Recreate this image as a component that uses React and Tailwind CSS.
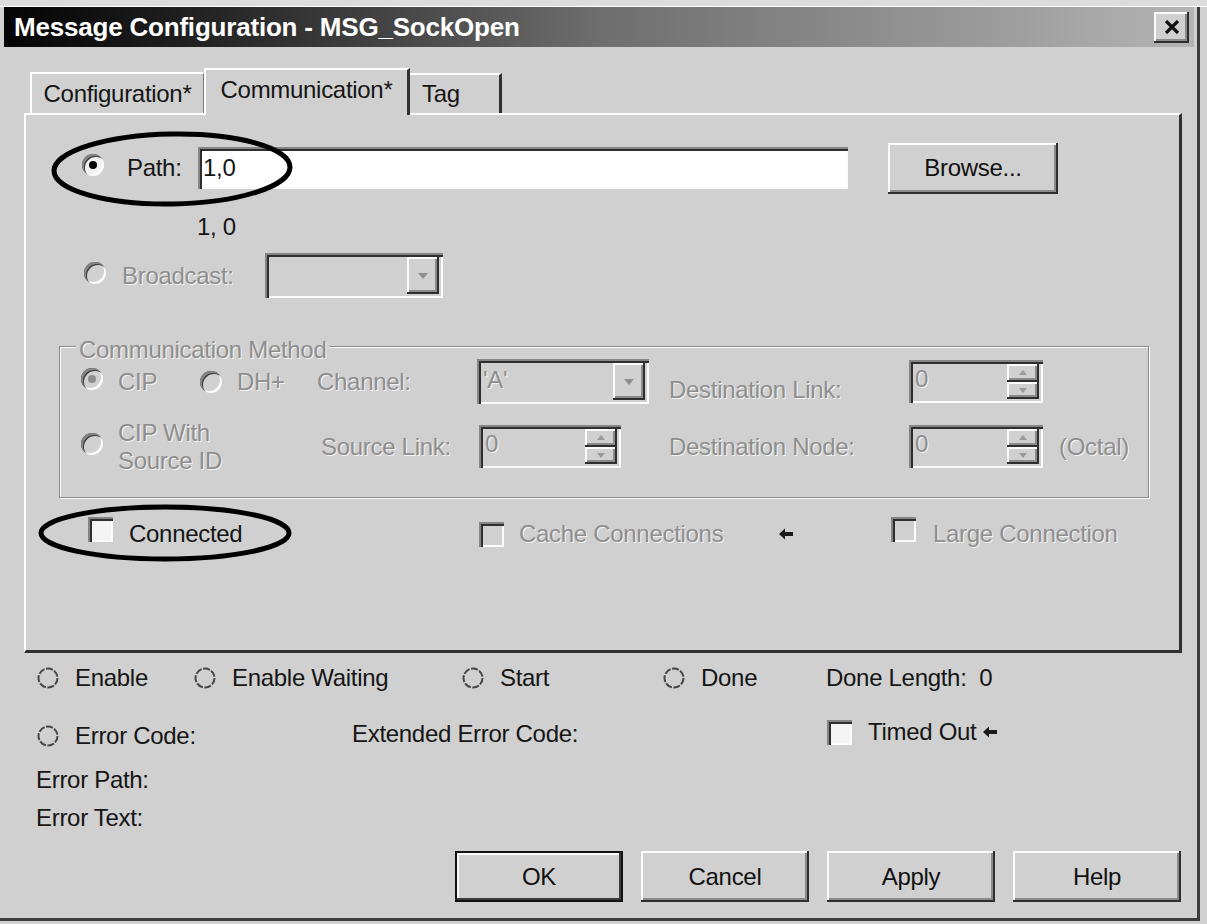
import React from "react";

// 3D edge helpers (classic Windows look)
const raised =
  "bg-[#d0d0d0] shadow-[inset_-2px_-2px_0_#2e2e2e,inset_2px_2px_0_#fbfbfb,inset_-4px_-4px_0_#8a8a8a]";
const sunken =
  "shadow-[inset_2px_2px_0_#858585,inset_4px_4px_0_#2e2e2e,inset_-2px_-2px_0_#fbfbfb]";
const dim = "text-[#8e8e8e] [text-shadow:1px_1px_0_#f4f4f4]";

const Radio = ({ checked, disabled }) => (
  <span
    className={`relative inline-block w-[22px] h-[22px] rounded-full ${disabled ? "bg-[#d0d0d0]" : "bg-[#f2f2f2]"} shadow-[inset_2px_2px_0_#858585,inset_3px_3px_0_#3a3a3a,inset_-2px_-2px_0_#fbfbfb] shrink-0`}
  >
    {checked && (
      <span
        className={`absolute left-[7px] top-[7px] w-[8px] h-[8px] rounded-full ${disabled ? "bg-[#8e8e8e]" : "bg-black"}`}
      />
    )}
  </span>
);

const Led = () => (
  <svg width="24" height="24" viewBox="0 0 24 24" className="shrink-0">
    <circle cx="12" cy="12" r="9.5" fill="none" stroke="#454545" strokeWidth="2" strokeDasharray="7 1.5" />
  </svg>
);

const Check = ({ disabled }) => (
  <span
    className={`inline-block w-[25px] h-[25px] shrink-0 ${disabled ? "bg-[#d0d0d0]" : "bg-[#f4f4f4]"} ${sunken}`}
  />
);

const Arrow = () => (
  <svg width="16" height="14" viewBox="0 0 16 14" className="shrink-0">
    <path d="M1 7 L7 1.5 L7 5 L15 5 L15 9 L7 9 L7 12.5 Z" fill="#1a1a1a" />
  </svg>
);

const Combo = ({ w, h, value }) => (
  <div className={`flex items-stretch ${w} ${h} ${sunken} p-[4px] pr-[4px]`}>
    <span className={`flex-1 pl-[2px] leading-[34px] ${dim}`}>{value}</span>
    <span className={`w-[32px] flex items-center justify-center ${raised}`}>
      <svg width="12" height="8" viewBox="0 0 12 8">
        <path d="M1 1 L11 1 L6 7 Z" fill="#8e8e8e" />
      </svg>
    </span>
  </div>
);

const Spin = ({ w, h }) => (
  <div className={`flex items-stretch ${w} ${h} ${sunken} p-[4px]`}>
    <span className={`flex-1 pl-[2px] leading-[30px] ${dim}`}>0</span>
    <span className="w-[32px] flex flex-col">
      <span className={`flex-1 flex items-center justify-center ${raised}`}>
        <svg width="8" height="5" viewBox="0 0 8 5"><path d="M0 5 L4 0 L8 5 Z" fill="#9a9a9a" /></svg>
      </span>
      <span className={`flex-1 flex items-center justify-center ${raised}`}>
        <svg width="8" height="5" viewBox="0 0 8 5"><path d="M0 0 L8 0 L4 5 Z" fill="#9a9a9a" /></svg>
      </span>
    </span>
  </div>
);

const Button = ({ w, label, def }) => (
  <button
    className={`${w} h-[51px] flex items-center justify-center text-[#111] ${
      def
        ? "bg-[#d0d0d0] shadow-[inset_0_0_0_2px_#111,inset_-4px_-4px_0_#3a3a3a,inset_4px_4px_0_#fbfbfb]"
        : raised
    }`}
  >
    {label}
  </button>
);

export default function App() {
  return (
    <div className="relative w-[1207px] h-[924px] bg-[#d0d0d0] overflow-hidden font-['Liberation_Sans',Arial,sans-serif] text-[24px] text-[#151515] tracking-[-0.3px]">
      <div className="h-[7px] bg-[#dcdcdc] border-b border-white" />
      <div className="flex w-[1200px] border-r-[3px] border-[#3c3c3c] h-[914px] border-b-[3px] pl-[4px] flex-col">
        {/* title bar */}
        <div className="h-[40px] w-[1190px] flex items-center bg-linear-to-r from-[#050505] via-[#6e6e6e] to-[#b4b4b4]">
          <span className="pl-[10px] font-bold text-white text-[26px] tracking-[-0.2px]">
            Message Configuration - MSG_SockOpen
          </span>
          <span className={`ml-auto mr-[5px] w-[35px] h-[31px] flex items-center justify-center ${raised}`}>
            <svg width="16" height="14" viewBox="0 0 16 14">
              <path d="M2 1 L14 13 M14 1 L2 13" stroke="#111" strokeWidth="3.2" />
            </svg>
          </span>
        </div>

        {/* tabs */}
        <div className="flex items-end pl-[26px] mt-[19px] h-[47px]">
          <div className="w-[174px] h-[41px] flex items-center justify-center border-t-2 border-l-2 border-white border-r border-r-[#7a7a7a]">
            Configuration*
          </div>
          <div className="w-[206px] h-[47px] -mb-[2px] relative z-10 flex items-start pt-[2px] justify-center bg-[#d0d0d0] border-t-2 border-l-2 border-white border-r-[3px] border-r-[#303030]">
            Communication*
          </div>
          <div className="w-[92px] h-[40px] flex items-center pl-[12px] border-t-2 border-white border-r-[3px] border-r-[#303030]">
            Tag
          </div>
        </div>

        {/* panel */}
        <div className="ml-[20px] w-[1158px] h-[540px] border-t-2 border-l-2 border-white border-r-[3px] border-b-[3px] border-r-[#303030] border-b-[#303030] flex flex-col">
          {/* path */}
          <div className="flex items-center h-[50px] mt-[28px]">
            <span className="ml-[56px]"><Radio checked /></span>
            <span className="ml-[23px] w-[71px]">Path:</span>
            <div className={`w-[650px] h-[42px] bg-white ${sunken} flex items-center pl-[5px]`}>1,0</div>
            <span className="ml-[40px]"><Button w="w-[170px]" label="Browse..." /></span>
          </div>
          <div className="ml-[171px] mt-[19px] h-[30px] leading-[30px]">1, 0</div>
          {/* broadcast */}
          <div className="flex items-center h-[45px] mt-[11px]">
            <span className="ml-[58px]"><Radio disabled /></span>
            <span className={`ml-[16px] w-[143px] ${dim}`}>Broadcast:</span>
            <Combo w="w-[178px]" h="h-[45px]" value="" />
          </div>

          {/* communication method group */}
          <div className="relative ml-[33px] mt-[48px] w-[1090px] h-[152px] border border-[#8a8a8a] shadow-[1px_1px_0_#fbfbfb,inset_1px_1px_0_#fbfbfb] flex flex-col">
            <span className={`absolute -top-[15px] left-[16px] px-[3px] bg-[#d0d0d0] ${dim}`}>
              Communication Method
            </span>
            <div className="flex items-center h-[45px] mt-[12px]">
              <span className="ml-[21px]"><Radio checked disabled /></span>
              <span className={`ml-[15px] w-[82px] ${dim}`}>CIP</span>
              <Radio disabled />
              <span className={`ml-[15px] w-[80px] ${dim}`}>DH+</span>
              <span className={`w-[160px] ${dim}`}>Channel:</span>
              <Combo w="w-[172px]" h="h-[45px]" value="'A'" />
              <span className={`ml-[20px] w-[240px] pt-[16px] ${dim}`}>Destination Link:</span>
              <Spin w="w-[134px]" h="h-[43px]" />
            </div>
            <div className="flex items-center h-[45px] mt-[20px]">
              <span className="ml-[21px]"><Radio disabled /></span>
              <span className={`ml-[15px] w-[203px] leading-[28px] ${dim}`}>
                CIP With
                <br />
                Source ID
              </span>
              <span className={`w-[158px] ${dim}`}>Source Link:</span>
              <Spin w="w-[142px]" h="h-[43px]" />
              <span className={`ml-[48px] w-[240px] ${dim}`}>Destination Node:</span>
              <Spin w="w-[134px]" h="h-[43px]" />
              <span className={`ml-[16px] ${dim}`}>(Octal)</span>
            </div>
          </div>

          {/* connected row */}
          <div className="flex items-center h-[30px] mt-[21px]">
            <span className="ml-[62px]"><Check /></span>
            <span className="ml-[16px] w-[350px]">Connected</span>
            <Check disabled />
            <span className={`ml-[15px] w-[259px] ${dim}`}>Cache Connections</span>
            <Arrow />
            <span className="ml-[97px]"><Check disabled /></span>
            <span className={`ml-[17px] ${dim}`}>Large Connection</span>
          </div>
        </div>

        {/* status */}
        <div className="flex items-center h-[30px] mt-[10px]">
          <span className="ml-[32px]"><Led /></span>
          <span className="ml-[15px] w-[118px]">Enable</span>
          <Led />
          <span className="ml-[15px] w-[229px]">Enable Waiting</span>
          <Led />
          <span className="ml-[15px] w-[162px]">Start</span>
          <Led />
          <span className="ml-[15px] w-[125px]">Done</span>
          <span>Done Length:&nbsp; 0</span>
        </div>
        <div className="flex items-center h-[30px] mt-[28px]">
          <span className="ml-[32px]"><Led /></span>
          <span className="ml-[15px] w-[277px]">Error Code:</span>
          <span className="w-[475px] -mt-[4px]">Extended Error Code:</span>
          <span className="-mt-[8px] flex items-center">
            <Check />
            <span className="ml-[16px]">Timed Out</span>
            <span className="ml-[6px]"><Arrow /></span>
          </span>
        </div>
        <div className="ml-[32px] mt-[10px] h-[38px] leading-[38px]">Error Path:</div>
        <div className="ml-[32px] h-[38px] leading-[38px]">Error Text:</div>

        {/* buttons */}
        <div className="flex items-center mt-[14px] ml-[451px] gap-[18px]">
          <Button w="w-[168px]" label="OK" def />
          <Button w="w-[168px]" label="Cancel" />
          <Button w="w-[168px]" label="Apply" />
          <Button w="w-[168px]" label="Help" />
        </div>
      </div>

      {/* hand-drawn annotation ellipses */}
      <svg className="absolute left-0 top-0 pointer-events-none" width="1207" height="924">
        <ellipse cx="172" cy="169" rx="118" ry="35" fill="none" stroke="#000" strokeWidth="5" transform="rotate(-1 172 169)" />
        <ellipse cx="165" cy="533" rx="124" ry="26" fill="none" stroke="#000" strokeWidth="5" />
      </svg>
    </div>
  );
}
